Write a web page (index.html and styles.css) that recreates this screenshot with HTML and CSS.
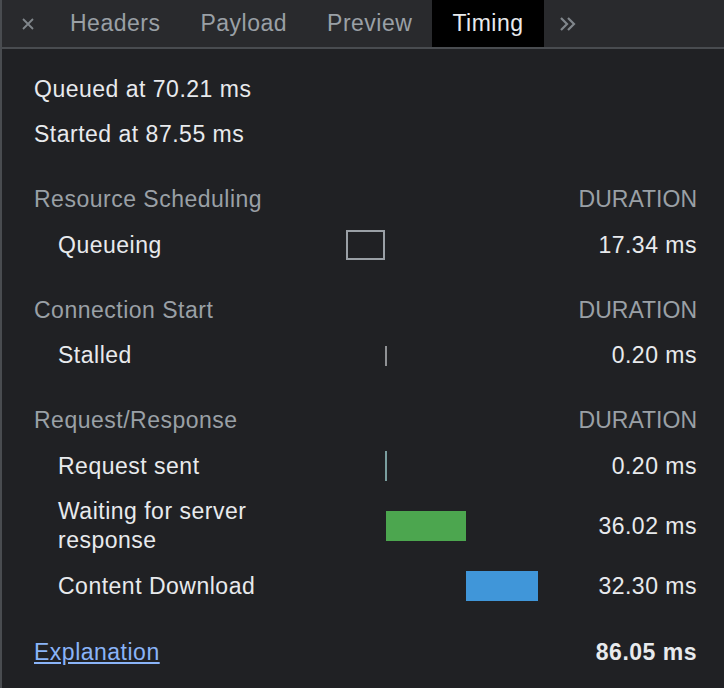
FILE: index.html
```html
<!DOCTYPE html>
<html lang="en">
    <head>
        <meta charset="UTF-8" />
        <meta name="viewport" content="width=device-width, initial-scale=1.0" />
        <title>Timing</title>
        <link rel="stylesheet" href="styles.css">
    </head>
    <body>
        <div class="panel">
            <!-- 탭바 -->
            <div class="tabs">
                <span class="close">
                    <svg width="12" height="12" viewBox="0 0 12 12"><path d="M1 1L11 11M11 1L1 11" stroke="#80868b" stroke-width="1.8" /></svg>
                </span>
                <span class="tab">Headers</span>
                <span class="tab">Payload</span>
                <span class="tab">Preview</span>
                <span class="tab active">Timing</span>
                <span class="more">
                    <svg width="18" height="16" viewBox="0 0 18 16"><path d="M2 2L8 8L2 14M9 2L15 8L9 14" fill="none" stroke="#80868b" stroke-width="2.2" /></svg>
                </span>
            </div>

            <!-- 타이밍 내용 -->
            <div class="timing">
                <div class="line">Queued at 70.21 ms</div>
                <div class="line">Started at 87.55 ms</div>

                <div class="row head">
                    <span class="label">Resource Scheduling</span>
                    <span class="track"></span>
                    <span class="value">DURATION</span>
                </div>
                <div class="row">
                    <span class="label">Queueing</span>
                    <span class="track"><i class="bar queueing" style="margin-left: 0; width: 38.7px"></i></span>
                    <span class="value">17.34 ms</span>
                </div>

                <div class="row head">
                    <span class="label">Connection Start</span>
                    <span class="track"></span>
                    <span class="value">DURATION</span>
                </div>
                <div class="row">
                    <span class="label">Stalled</span>
                    <span class="track"><i class="bar stalled" style="margin-left: 38.7px"></i></span>
                    <span class="value">0.20 ms</span>
                </div>

                <div class="row head">
                    <span class="label">Request/Response</span>
                    <span class="track"></span>
                    <span class="value">DURATION</span>
                </div>
                <div class="row">
                    <span class="label">Request sent</span>
                    <span class="track"><i class="bar sent" style="margin-left: 39px"></i></span>
                    <span class="value">0.20 ms</span>
                </div>
                <div class="row">
                    <span class="label">Waiting for server<br>response</span>
                    <span class="track"><i class="bar waiting" style="margin-left: 40px; width: 80px"></i></span>
                    <span class="value">36.02 ms</span>
                </div>
                <div class="row">
                    <span class="label">Content Download</span>
                    <span class="track"><i class="bar download" style="margin-left: 120px; width: 72px"></i></span>
                    <span class="value">32.30 ms</span>
                </div>

                <div class="row total">
                    <a class="label" href="#">Explanation</a>
                    <span class="value">86.05 ms</span>
                </div>
            </div>
        </div>
    </body>
</html>
```

FILE: styles.css
```css
html,
body {
    margin: 0;
    padding: 0;
    height: 100%;
}
body {
    background: #202124;
    color: #e8eaed;
    font-family: "Liberation Sans", Arial, sans-serif;
    font-size: 23px;
    letter-spacing: 0.5px;
}

.panel {
    min-height: 100%;
    border-left: 2px solid #494c50;
}

/* 탭바 */
.tabs {
    display: flex;
    align-items: stretch;
    height: 47px;
    background: #292a2d;
    border-bottom: 2px solid #494c50;
}
.close {
    display: flex;
    align-items: center;
    justify-content: center;
    width: 44px;
    margin-left: 4px;
}
.tab {
    display: flex;
    align-items: center;
    padding: 0 20px;
    color: #9aa0a6;
}
.tab.active {
    background: #000;
    color: #e8eaed;
}
.more {
    display: flex;
    align-items: center;
    padding: 0 0 0 15px;
}

/* 타이밍 */
.timing {
    padding: 18px 27px 0 32px;
}
.line,
.row {
    display: flex;
    align-items: center;
    padding: 8px 0;
    line-height: 29px;
}
.row .label {
    flex: 1;
    padding-left: 24px;
}
.row.head {
    margin-top: 20px;
    color: #9aa0a6;
}
.row.head .label {
    padding-left: 0;
}
.row.head .value {
    letter-spacing: 0;
}
.track {
    display: flex;
    align-items: center;
    width: 192px;
}
.value {
    width: 159px;
    text-align: right;
}

/* 바 */
.bar {
    display: block;
    height: 30px;
}
.bar.queueing {
    box-sizing: border-box;
    border: 2px solid #9aa0a6;
}
.bar.stalled {
    width: 2px;
    height: 20px;
    background: #8f9194;
}
.bar.sent {
    width: 2px;
    background: #7a9e9f;
}
.bar.waiting {
    background: #4ca64f;
}
.bar.download {
    background: #4096d9;
}

/* 합계 */
.row.total {
    margin-top: 21px;
}
.row.total .label {
    padding-left: 0;
    color: #8ab4f8;
}
.row.total .value {
    font-weight: bold;
}
```
